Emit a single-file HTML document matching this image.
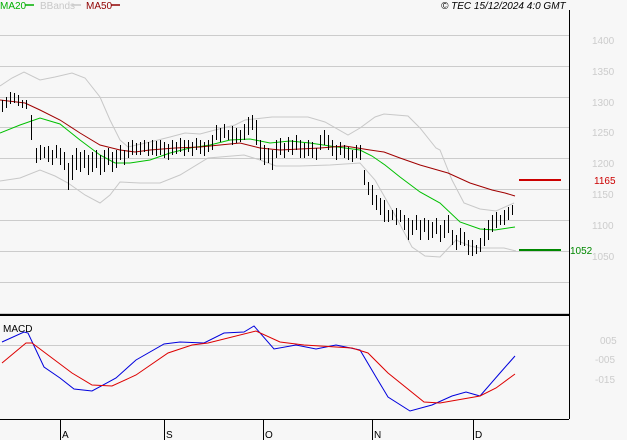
<!DOCTYPE html><html><head><style>body{margin:0;background:#f7f7f7}svg{display:block}text{font-family:"Liberation Sans",sans-serif;font-size:10px}</style></head><body>
<svg width="627" height="440" viewBox="0 0 627 440" xmlns="http://www.w3.org/2000/svg">
<rect width="627" height="440" fill="#f7f7f7"/>
<g stroke="#cccccc" stroke-width="1" shape-rendering="crispEdges" transform="translate(0,0.5)">
<line x1="0" y1="35" x2="569" y2="35"/><line x1="0" y1="66" x2="569" y2="66"/><line x1="0" y1="97" x2="569" y2="97"/><line x1="0" y1="127" x2="569" y2="127"/><line x1="0" y1="158" x2="569" y2="158"/><line x1="0" y1="189" x2="569" y2="189"/><line x1="0" y1="220" x2="569" y2="220"/><line x1="0" y1="251" x2="569" y2="251"/><line x1="0" y1="282" x2="569" y2="282"/>
<line x1="0" y1="345" x2="569" y2="345"/>
</g>
<g shape-rendering="crispEdges">
<line x1="569.5" y1="10" x2="569.5" y2="419" stroke="#000"/>
<line x1="0" y1="315" x2="569" y2="315" stroke="#000" stroke-width="2"/>
<line x1="0" y1="313.5" x2="569" y2="313.5" stroke="#ccc" stroke-width="1"/>
<line x1="0" y1="419.5" x2="569" y2="419.5" stroke="#000"/>
<g stroke="#000" transform="translate(0.5,0)"><line x1="60" y1="419" x2="60" y2="440"/><line x1="164" y1="419" x2="164" y2="440"/><line x1="263" y1="419" x2="263" y2="440"/><line x1="372" y1="419" x2="372" y2="440"/><line x1="473" y1="419" x2="473" y2="440"/></g>
</g>
<g fill="#000"><text x="62" y="438">A</text><text x="166" y="438">S</text><text x="265" y="438">O</text><text x="374" y="438">N</text><text x="475" y="438">D</text></g>
<g fill="#cccccc"><text x="592" y="44">1400</text><text x="592" y="75">1350</text><text x="592" y="106">1300</text><text x="592" y="136">1250</text><text x="592" y="167">1200</text><text x="592" y="198">1150</text><text x="592" y="229">1100</text><text x="592" y="260">1050</text>
<text x="600" y="344">005</text><text x="595" y="363">-005</text><text x="595" y="383">-015</text></g>
<text x="0" y="9" fill="#00b000">MA20</text><line x1="25" y1="5" x2="34" y2="5" stroke="#00b000" stroke-width="1.5"/>
<text x="40" y="9" fill="#c8c8c8">BBands</text><line x1="72" y1="5" x2="81" y2="5" stroke="#c8c8c8" stroke-width="1.5"/>
<text x="86" y="9" fill="#900000">MA50</text><line x1="111" y1="5" x2="120" y2="5" stroke="#900000" stroke-width="1.5"/>
<text x="441" y="9" fill="#000" font-style="italic">© TEC 15/12/2024 4:0 GMT</text>
<text x="3" y="332" fill="#000">MACD</text>
<polyline fill="none" stroke="#c8c8c8" points="0,86 12,78 24,72 40,80 55,77 72,73 85,78 100,97 110,120 120,140 128,147 150,142 170,137 185,133 200,134 215,130 235,125 245,120 272,117 308,117 325,122 348,135 360,128 375,117 384,114 408,116 420,128 436,148 440,150 452,180 464,203 480,209 496,211 514,203"/>
<polyline fill="none" stroke="#c8c8c8" points="0,181 20,178 40,170 55,176 68,183 85,195 100,203 110,195 120,182 140,183 160,183 180,175 208,158 244,155 260,160 276,166 300,166 330,165 360,163 375,180 396,217 412,247 425,256 440,257 456,240 470,246 480,248 504,248 516,251"/>
<polyline fill="none" stroke="#00c000" points="0,133 20,125 40,118 60,124 80,140 100,155 115,163 130,163 150,160 170,153 190,148 210,145 230,140 250,139 270,143 290,141 310,143 330,146 345,148 360,150 372,156 385,165 400,177 420,192 440,203 460,222 480,229 495,230 515,227"/>
<polyline fill="none" stroke="#a00000" points="0,100 25,103 40,110 60,120 80,133 100,145 120,150 135,152 150,150 175,148 200,147 220,145 240,143 260,148 280,150 300,149 320,148 345,146 370,150 384,152 400,158 420,165 448,173 470,183 492,190 505,193 515,196"/>
<path stroke="#000" stroke-width="1" fill="none" shape-rendering="crispEdges" transform="translate(0.5,0)" d="M2 100V112M6 97V108M10 92V104M14 93V103M18 95V106M22 100V108M26 100V109M31 115V140M36 148V163M40 145V160M44 147V158M48 146V162M52 150V165M56 145V158M60 148V165M64 152V170M68 163V190M72 155V180M76 148V170M80 152V172M84 150V168M88 155V175M92 152V172M96 150V168M100 155V175M104 150V172M108 148V165M112 152V172M116 150V168M120 145V160M124 150V165M128 142V158M132 140V155M136 143V155M140 142V155M144 140V152M148 142V156M152 140V155M156 141V156M160 140V155M164 142V158M168 144V160M172 140V155M176 142V154M180 138V152M184 140V156M188 140V152M192 142V156M196 138V150M200 140V154M204 142V156M208 140V152M212 135V150M216 125V140M220 128V142M224 124V138M228 130V140M232 126V145M236 128V143M240 130V142M244 124V140M248 117V135M252 115V130M256 120V145M260 140V160M264 145V165M268 148V163M272 150V170M276 140V158M280 138V155M284 143V158M288 137V152M292 140V155M296 135V150M300 140V158M304 143V158M308 140V156M312 142V158M316 148V160M320 135V150M324 130V145M328 135V150M332 140V156M336 145V160M340 142V155M344 145V158M348 147V160M352 150V162M356 145V158M360 145V160M364 170V185M368 182V195M372 185V205M376 195V210M380 198V215M384 200V222M388 210V222M392 210V220M396 208V225M400 210V222M404 215V230M408 218V240M412 220V235M416 215V230M420 220V240M424 218V232M428 220V240M432 222V238M436 218V234M440 225V242M444 220V238M448 215V233M452 230V245M456 235V250M460 228V245M464 232V246M468 240V255M472 240V256M476 245V254M480 238V252M484 228V246M488 220V240M492 215V232M496 212V228M500 215V225M504 210V225M508 207V220M512 205V215"/>
<line x1="519" y1="180" x2="561" y2="180" stroke="#cc0000" stroke-width="2" shape-rendering="crispEdges"/>
<text x="594" y="184" fill="#cc0000">1165</text>
<line x1="519" y1="250" x2="561" y2="250" stroke="#008800" stroke-width="2" shape-rendering="crispEdges"/>
<text x="570" y="254" fill="#008800">1052</text>
<polyline fill="none" stroke="#0000dd" points="2,342 24,332 28,333 44,367 60,378 74,389 92,391 116,378 136,360 164,344 180,342 204,343 224,333 244,332 254,326 274,349 296,345 316,349 336,345 360,350 376,377 388,397 410,411 432,405 452,396 466,392 480,396 500,373 515,356"/>
<polyline fill="none" stroke="#dd0000" points="2,363 26,343 32,343 72,373 92,385 112,386 136,375 168,353 192,345 208,343 256,331 280,342 304,345 352,348 368,353 388,373 424,402 440,403 480,396 496,388 515,374"/>
</svg>
</body></html>
